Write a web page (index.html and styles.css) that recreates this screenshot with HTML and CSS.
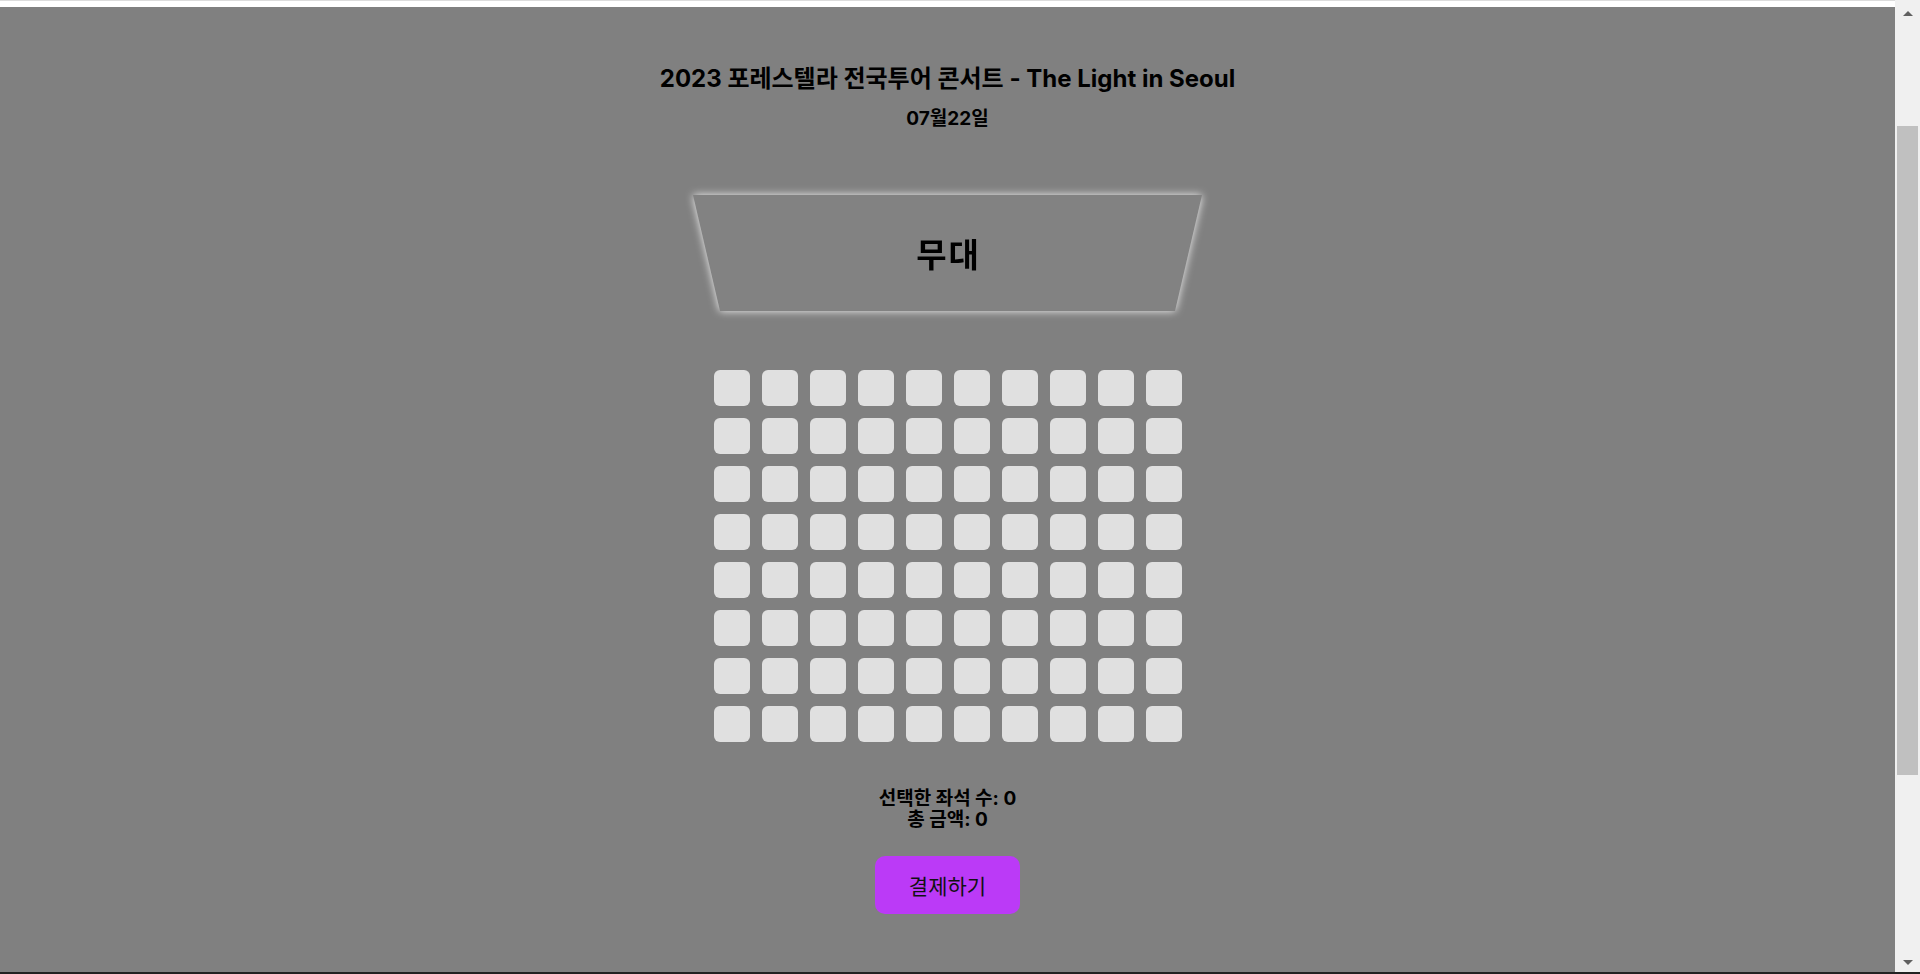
FILE: index.html
```html
<!DOCTYPE html>
<html lang="ko">
<head>
    <meta charset="UTF-8">
    <meta name="viewport" content="width=device-width, initial-scale=1.0">
    <title>좌석 선택</title>
    <link rel="stylesheet" href="styles.css">
</head>
<body>
    <div class="topbar"></div>

    <div class="page">
        <h1 class="title">2023 포레스텔라 전국투어 콘서트 - The Light in Seoul</h1>
        <p class="date">07월22일</p>

        <!-- Stage -->
        <div class="stage-wrap">
            <div class="stage">무대</div>
        </div>

        <!-- Seats -->
        <div class="seats">
            <div class="seat"></div><div class="seat"></div><div class="seat"></div><div class="seat"></div><div class="seat"></div>
            <div class="seat"></div><div class="seat"></div><div class="seat"></div><div class="seat"></div><div class="seat"></div>
            <div class="seat"></div><div class="seat"></div><div class="seat"></div><div class="seat"></div><div class="seat"></div>
            <div class="seat"></div><div class="seat"></div><div class="seat"></div><div class="seat"></div><div class="seat"></div>
            <div class="seat"></div><div class="seat"></div><div class="seat"></div><div class="seat"></div><div class="seat"></div>
            <div class="seat"></div><div class="seat"></div><div class="seat"></div><div class="seat"></div><div class="seat"></div>
            <div class="seat"></div><div class="seat"></div><div class="seat"></div><div class="seat"></div><div class="seat"></div>
            <div class="seat"></div><div class="seat"></div><div class="seat"></div><div class="seat"></div><div class="seat"></div>
            <div class="seat"></div><div class="seat"></div><div class="seat"></div><div class="seat"></div><div class="seat"></div>
            <div class="seat"></div><div class="seat"></div><div class="seat"></div><div class="seat"></div><div class="seat"></div>
            <div class="seat"></div><div class="seat"></div><div class="seat"></div><div class="seat"></div><div class="seat"></div>
            <div class="seat"></div><div class="seat"></div><div class="seat"></div><div class="seat"></div><div class="seat"></div>
            <div class="seat"></div><div class="seat"></div><div class="seat"></div><div class="seat"></div><div class="seat"></div>
            <div class="seat"></div><div class="seat"></div><div class="seat"></div><div class="seat"></div><div class="seat"></div>
            <div class="seat"></div><div class="seat"></div><div class="seat"></div><div class="seat"></div><div class="seat"></div>
            <div class="seat"></div><div class="seat"></div><div class="seat"></div><div class="seat"></div><div class="seat"></div>
        </div>

        <div class="summary">
            <p>선택한 좌석 수: <span id="seatCount">0</span></p>
            <p>총 금액: <span id="totalPrice">0</span></p>
        </div>

        <button type="button" class="pay">결제하기</button>
    </div>

    <!-- window scrollbar -->
    <div class="scrollbar">
        <span class="arrow up"></span>
        <div class="track"><div class="thumb"></div></div>
        <span class="arrow down"></span>
    </div>

    <div class="bottom-line"></div>
</body>
</html>
```

FILE: styles.css
```css
html, body {
    margin: 0;
    padding: 0;
}

body {
    background-color: #808080;
    font-family: Inter, "Noto Sans CJK KR", sans-serif;
    color: #000;
}

.topbar {
    height: 6px;
    background-color: #fff;
    border-top: 1px solid #dcdcdc;
}

.page {
    display: flex;
    flex-direction: column;
    align-items: center;
    padding-right: 25px;
    padding-bottom: 60px;
}

.title {
    margin: 56px 0 0;
    font-size: 24px;
    line-height: 32px;
    font-weight: 700;
}

.date {
    margin: 12px 0 0;
    font-size: 19px;
    line-height: 24px;
    font-weight: 700;
}

/* Stage box */
.stage-wrap {
    margin-top: 64px;
    filter: drop-shadow(0 0 4px rgba(255, 255, 255, 0.9));
}

.stage {
    width: 509px;
    height: 116px;
    display: flex;
    align-items: center;
    justify-content: center;
    background-color: #828282;
    clip-path: polygon(0 0, 100% 0, calc(100% - 27px) 100%, 27px 100%);
    font-size: 33px;
    font-weight: 700;
    letter-spacing: 2px;
    text-indent: 2px;
}

.seats {
    margin-top: 59px;
    display: grid;
    grid-template-columns: repeat(10, 36px);
    grid-auto-rows: 36px;
    gap: 12px;
}

.seat {
    background-color: #e0e0e0;
    border-radius: 6px;
    cursor: pointer;
}

.summary {
    margin-top: 46px;
    text-align: center;
    font-size: 19px;
    line-height: 21px;
    font-weight: 700;
}

.summary p {
    margin: 0;
}

.pay {
    margin-top: 26px;
    width: 145px;
    height: 58px;
    border: none;
    border-radius: 10px;
    background-color: #bb3af7;
    color: #111;
    font-family: "Noto Sans CJK KR", sans-serif;
    font-size: 21px;
    cursor: pointer;
}

/* fake window scrollbar */
.scrollbar {
    position: fixed;
    top: 0;
    right: 0;
    bottom: 0;
    width: 25px;
    background-color: #f0f0f0;
    display: flex;
    flex-direction: column;
    align-items: center;
}

.arrow {
    width: 0;
    height: 0;
    border-left: 5px solid transparent;
    border-right: 5px solid transparent;
}

.arrow.up {
    margin-top: 11px;
    border-bottom: 5px solid #606060;
}

.arrow.down {
    margin-bottom: 9px;
    border-top: 5px solid #606060;
}

.track {
    flex: 1;
    align-self: stretch;
    padding: 110px 2px 0;
}

.thumb {
    height: 649px;
    background-color: #c0c0c0;
}

.bottom-line {
    position: fixed;
    left: 0;
    right: 0;
    bottom: 0;
    height: 2px;
    background-color: #222;
}
```
